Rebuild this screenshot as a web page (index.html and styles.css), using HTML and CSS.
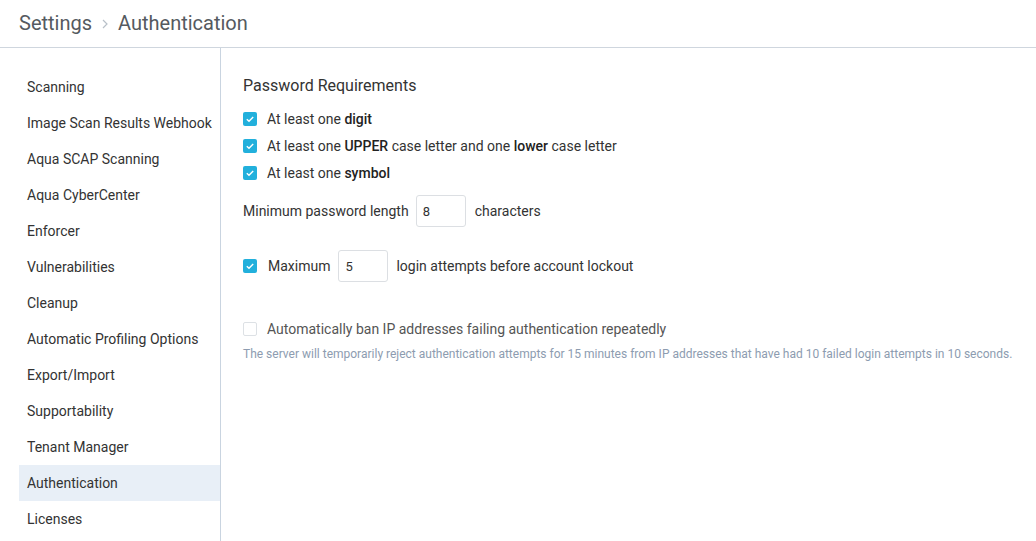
FILE: index.html
```html
<!DOCTYPE html>
<html>
<head>
<meta charset="utf-8">
<link rel="stylesheet" href="styles.css">
</head>
<body>
<header class="header">
  <span class="crumb">Settings</span>
  <svg class="chev" width="8" height="12" viewBox="0 0 8 12"><path d="M2 2l4 4-4 4" fill="none" stroke="#b8c0c8" stroke-width="1.2"/></svg>
  <span class="crumb">Authentication</span>
</header>
<div class="layout">
  <nav class="sidebar">
    <div class="nav-item">Scanning</div>
    <div class="nav-item">Image Scan Results Webhook</div>
    <div class="nav-item">Aqua SCAP Scanning</div>
    <div class="nav-item">Aqua CyberCenter</div>
    <div class="nav-item">Enforcer</div>
    <div class="nav-item">Vulnerabilities</div>
    <div class="nav-item">Cleanup</div>
    <div class="nav-item">Automatic Profiling Options</div>
    <div class="nav-item">Export/Import</div>
    <div class="nav-item">Supportability</div>
    <div class="nav-item">Tenant Manager</div>
    <div class="nav-item active">Authentication</div>
    <div class="nav-item">Licenses</div>
  </nav>
  <main class="content">
    <h2 class="section-title">Password Requirements</h2>
    <div class="check-row">
      <span class="cb checked"><svg width="14" height="14" viewBox="0 0 14 14"><path d="M3.8 7.2l2.2 2.1 4.2-4.3" fill="none" stroke="#fff" stroke-width="1.4"/></svg></span>
      <span>At least one <b>digit</b></span>
    </div>
    <div class="check-row">
      <span class="cb checked"><svg width="14" height="14" viewBox="0 0 14 14"><path d="M3.8 7.2l2.2 2.1 4.2-4.3" fill="none" stroke="#fff" stroke-width="1.4"/></svg></span>
      <span>At least one <b>UPPER</b> case letter and one <b>lower</b> case letter</span>
    </div>
    <div class="check-row">
      <span class="cb checked"><svg width="14" height="14" viewBox="0 0 14 14"><path d="M3.8 7.2l2.2 2.1 4.2-4.3" fill="none" stroke="#fff" stroke-width="1.4"/></svg></span>
      <span>At least one <b>symbol</b></span>
    </div>
    <div class="field-row min-row">
      <span>Minimum password length</span>
      <span class="num-input">8</span>
      <span>characters</span>
    </div>
    <div class="field-row max-row">
      <span class="cb checked"><svg width="14" height="14" viewBox="0 0 14 14"><path d="M3.8 7.2l2.2 2.1 4.2-4.3" fill="none" stroke="#fff" stroke-width="1.4"/></svg></span>
      <span class="max-label">Maximum</span>
      <span class="num-input">5</span>
      <span>login attempts before account lockout</span>
    </div>
    <div class="check-row ban-row">
      <span class="cb"></span>
      <span>Automatically ban IP addresses failing authentication repeatedly</span>
    </div>
    <p class="hint">The server will temporarily reject authentication attempts for 15 minutes from IP addresses that have had 10 failed login attempts in 10 seconds.</p>
  </main>
</div>
</body>
</html>
```

FILE: styles.css
```css
* { box-sizing: border-box; }
html, body { margin: 0; padding: 0; }
body {
  font-family: Roboto, "Noto Sans", sans-serif;
  color: #3c3c3c;
  background: #fff;
  width: 1036px;
  height: 541px;
  overflow: hidden;
}
.header {
  height: 48px;
  border-bottom: 1px solid #cfd6de;
  display: flex;
  align-items: center;
  padding: 0 0 1px 19px;
}
.crumb {
  font-size: 20px;
  color: #555a60;
}
.chev { margin: 2px 9px 0 9px; }
.layout {
  display: flex;
  height: 493px;
}
.sidebar {
  width: 221px;
  border-right: 1px solid #c9d4e0;
  padding: 21px 0 0 19px;
  display: flex;
  flex-direction: column;
}
.nav-item {
  height: 36px;
  line-height: 36px;
  padding-left: 8px;
  font-size: 14px;
  color: #333;
  white-space: nowrap;
}
.nav-item.active { background: #e8eff7; }
.content {
  flex: 1;
  padding: 28px 0 0 22px;
}
.section-title {
  margin: 0 0 9px 0;
  font-size: 16px;
  font-weight: 400;
  color: #333;
  line-height: 20px;
}
.check-row {
  display: flex;
  align-items: center;
  height: 27px;
  font-size: 14px;
  color: #333;
}
.check-row b, .field-row b { font-weight: 500; color: #222; }
.cb {
  width: 14px;
  height: 14px;
  border-radius: 2px;
  border: 1px solid #d6dbe0;
  margin-right: 10px;
  flex: none;
  display: flex;
  background: #fff;
}
.cb.checked {
  background: #22b0dc;
  border: none;
}
.field-row {
  display: flex;
  align-items: center;
  font-size: 14px;
  color: #333;
}
.min-row { margin-top: 9px; height: 32px; }
.min-row .num-input { margin-left: 7px; }
.max-row { margin-top: 23px; height: 32px; }
.max-row .num-input { margin-right: 8px; }
.max-label { margin-left: 1px; }
.num-input {
  width: 50px;
  height: 32px;
  border: 1px solid #dcdfe3;
  border-radius: 3px;
  margin: 0 9px 0 8px;
  padding-left: 6px;
  display: flex;
  align-items: center;
  font-size: 13px;
  color: #333;
}
.ban-row { margin-top: 33px; color: #555; }
.ban-row .cb { border-color: #dde1e5; }
.hint {
  margin: 0;
  margin-top: 4px;
  font-size: 12px;
  color: #8d9cb0;
  line-height: 16px;
}
```
